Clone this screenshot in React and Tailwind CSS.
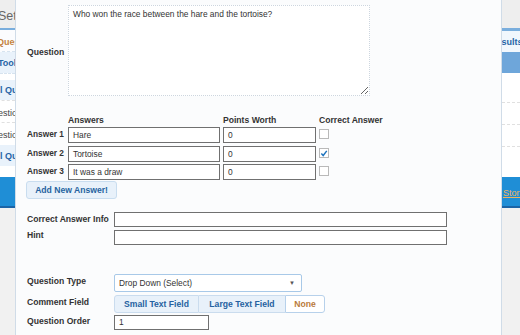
import React from 'react'

function Check({checked}) {
    return (
        <div className="w-[10px] h-[10px] mt-[2px] border border-[#b9b9b9] bg-white flex items-center justify-center">
            {checked ? (
                <svg width="9" height="9" viewBox="0 0 9 9">
                    <path d="M1.5 4.5 L3.6 6.8 L7.6 1.6" fill="none" stroke="#1e73be" strokeWidth="1.6" />
                </svg>
            ) : null}
        </div>
    )
}

function Field({value, className}) {
    return (
        <div className={"bg-white border border-[#707070] px-[4px] flex items-center text-[8.4px] text-[#333] " + className}>
            {value}
        </div>
    )
}

const answers = [
    {label: 'Answer 1', text: 'Hare', points: '0', correct: false, gap: 'mt-[2px]'},
    {label: 'Answer 2', text: 'Tortoise', points: '0', correct: true, gap: 'mt-[3px]'},
    {label: 'Answer 3', text: 'It was a draw', points: '0', correct: false, gap: 'mt-[2px]'},
]

function App() {
    return (
        <div className="relative w-[520px] h-[335px] overflow-hidden bg-[#f1f1f1] font-['Liberation_Sans',Arial,sans-serif]">
            {/* page behind the dialog */}
            <div className="flex justify-between h-full">
                <div className="w-[15px] flex flex-col overflow-hidden whitespace-nowrap">
                    <div className="h-[28px] shrink-0 bg-[#eeeeee] text-[12.5px] text-[#666] leading-[32px] -ml-[2px]">Settings</div>
                    <div className="h-[2px] shrink-0 bg-[#7aaedd]"></div>
                    <div className="h-[22px] shrink-0 bg-[#fbfcfe] text-[9px] font-bold text-[#c4823f] leading-[24px] -ml-[3px] border-b border-dashed border-[#d6e3ef]">Questions</div>
                    <div className="h-[21px] shrink-0 bg-[#e9f2fb] text-[9px] font-bold text-[#2764a6] leading-[22px] -ml-[2px]">Tools</div>
                    <div className="h-[7px] shrink-0 bg-white border-t border-dashed border-[#d6e3ef]"></div>
                    <div className="h-[20px] shrink-0 bg-[#e9f2fb] text-[9px] font-bold text-[#2764a6] leading-[20px] -ml-[9px]">All Questions</div>
                    <div className="h-[22px] shrink-0 bg-white text-[9px] text-[#444] leading-[24px] -ml-[14px] border-t border-dashed border-[#e0e0e0]">Question one</div>
                    <div className="h-[23px] shrink-0 bg-white text-[9px] text-[#444] leading-[24px] -ml-[14px] border-t border-dashed border-[#e0e0e0]">Question two</div>
                    <div className="h-[21px] shrink-0 bg-[#e9f2fb] text-[9px] font-bold text-[#2764a6] leading-[22px] -ml-[9px]">All Questions</div>
                    <div className="h-[11px] shrink-0 bg-white"></div>
                    <div className="h-[31px] shrink-0 bg-[#1f8ed6] border-b-2 border-[#1b64a6]"></div>
                </div>

                <div className="w-[18px] flex flex-col overflow-hidden whitespace-nowrap">
                    <div className="h-[28px] shrink-0 bg-[#eeeeee]"></div>
                    <div className="h-[3px] shrink-0 bg-[#7aaedd]"></div>
                    <div className="h-[21px] shrink-0 bg-[#f1f7fd] text-[9px] font-bold text-[#2764a6] leading-[22px] -ml-[12px]">Results</div>
                    <div className="h-[21px] shrink-0 bg-[#6ea6da]"></div>
                    <div className="h-[29px] shrink-0 bg-white"></div>
                    <div className="h-[22px] shrink-0 bg-white border-t border-dashed border-[#e0e0e0]"></div>
                    <div className="h-[22px] shrink-0 bg-white border-t border-dashed border-[#e0e0e0]"></div>
                    <div className="h-[31px] shrink-0 bg-white border-t border-dashed border-[#e0e0e0]"></div>
                    <div className="h-[31px] shrink-0 bg-[#1f8ed6] border-b-2 border-[#1b64a6] text-[9px] text-[#f1b45c] underline leading-[32px] pl-[1px]">Store</div>
                </div>
            </div>

            {/* dialog */}
            <div className="absolute top-0 bottom-0 left-[15px] w-[487px] bg-[#fbfcfd] border-x border-[#d0dce8] pl-[11px] text-[#333]">
                <div className="flex items-center mt-[5px]">
                    <div className="w-[41px] text-[8.6px] font-bold mt-[3px]">Question</div>
                    <textarea
                        readOnly
                        defaultValue="Who won the race between the hare and the tortoise?"
                        className="block w-[302px] h-[91px] bg-white border border-dotted border-[#cdd6df] px-[4px] py-[2px] text-[8.4px] leading-[12px] text-[#333] outline-none"
                    />
                </div>

                <div className="flex mt-[19px] h-[10px] text-[8.6px] font-bold leading-[10px]">
                    <div className="w-[41px]"></div>
                    <div className="w-[155px]">Answers</div>
                    <div className="w-[96px]">Points Worth</div>
                    <div>Correct Answer</div>
                </div>

                {answers.map((a, i) => (
                    <div key={i} className={"flex h-[16px] " + a.gap}>
                        <div className="w-[41px] text-[8.3px] font-bold leading-[14px] whitespace-nowrap">{a.label}</div>
                        <Field value={a.text} className="w-[152px] h-[16px]" />
                        <Field value={a.points} className="w-[93px] h-[16px] ml-[3px]" />
                        <div className="ml-[3px]"><Check checked={a.correct} /></div>
                    </div>
                ))}

                <button className="block mt-[1px] -ml-[1px] w-[91px] h-[18px] rounded-[3px] bg-[#e8f1fa] border border-[#c9ddef] text-[8.6px] font-bold text-[#2563a0]">
                    Add New Answer!
                </button>

                <div className="flex items-center mt-[13px]">
                    <div className="w-[87px] text-[8.6px] font-bold whitespace-nowrap">Correct Answer Info</div>
                    <Field value="" className="w-[333px] h-[15px]" />
                </div>
                <div className="flex items-start mt-[3px]">
                    <div className="w-[87px] text-[8.6px] font-bold leading-[11px]">Hint</div>
                    <Field value="" className="w-[333px] h-[15px]" />
                </div>

                <div className="flex items-center mt-[29px]">
                    <div className="w-[87px] text-[8.6px] font-bold -mt-[3px]">Question Type</div>
                    <div className="w-[188px] h-[18px] bg-white border border-[#a8c9e8] rounded-[2px] px-[4px] flex items-center justify-between text-[8.4px] text-[#333]">
                        <span>Drop Down (Select)</span>
                        <span className="text-[6px] text-[#555] pr-[2px]">▼</span>
                    </div>
                </div>

                <div className="flex items-center mt-[3px]">
                    <div className="w-[87px] text-[8.6px] font-bold -mt-[3px]">Comment Field</div>
                    <div className="flex h-[18px] text-[8.6px] font-bold">
                        <div className="w-[85px] bg-[#e8f1fa] border border-[#cadcee] rounded-l-[3px] flex items-center justify-center text-[#2561a0]">Small Text Field</div>
                        <div className="w-[86px] bg-[#e8f1fa] border-y border-[#cadcee] flex items-center justify-center text-[#2561a0]">Large Text Field</div>
                        <div className="w-[40px] bg-white border border-[#b7d1eb] rounded-r-[3px] flex items-center justify-center text-[#b97b3c]">None</div>
                    </div>
                </div>

                <div className="flex items-center mt-[2px]">
                    <div className="w-[87px] text-[8.6px] font-bold -mt-[3px]">Question Order</div>
                    <Field value="1" className="w-[95px] h-[15px]" />
                </div>
            </div>
        </div>
    )
}

export default App
